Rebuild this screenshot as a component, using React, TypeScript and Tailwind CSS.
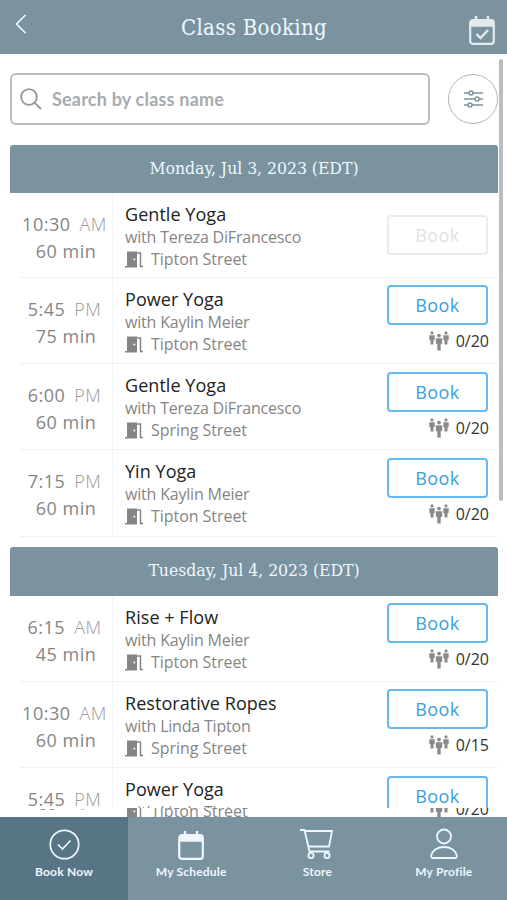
import React from 'react';

const days = [
  {
    title: 'Monday, Jul 3, 2023 (EDT)',
    classes: [
      { time: '10:30', period: 'AM', length: 60, name: 'Gentle Yoga', teacher: 'Tereza DiFrancesco', place: 'Tipton Street', spots: '', size: 'h-[85px]', gap: 'mt-[22px]' },
      { time: '5:45', period: 'PM', length: 75, name: 'Power Yoga', teacher: 'Kaylin Meier', place: 'Tipton Street', spots: '0/20', size: 'h-[86px]', gap: 'mt-[7px]' },
      { time: '6:00', period: 'PM', length: 60, name: 'Gentle Yoga', teacher: 'Tereza DiFrancesco', place: 'Spring Street', spots: '0/20', size: 'h-[86px]', gap: 'mt-[8px]' },
      { time: '7:15', period: 'PM', length: 60, name: 'Yin Yoga', teacher: 'Kaylin Meier', place: 'Tipton Street', spots: '0/20', size: 'h-[87px]', gap: 'mt-[8px]' },
    ],
  },
  {
    title: 'Tuesday, Jul 4, 2023 (EDT)',
    classes: [
      { time: '6:15', period: 'AM', length: 45, name: 'Rise + Flow', teacher: 'Kaylin Meier', place: 'Tipton Street', spots: '0/20', size: 'h-[86px]', gap: 'mt-[7px]' },
      { time: '10:30', period: 'AM', length: 60, name: 'Restorative Ropes', teacher: 'Linda Tipton', place: 'Spring Street', spots: '0/15', size: 'h-[86px]', gap: 'mt-[7px]' },
    ],
  },
];

type ClassItem = (typeof days)[number]['classes'][number];

function DoorIcon() {
  return (
    <svg width="18" height="17" viewBox="0 0 18 17" className="shrink-0">
      <path d="M2 0.5h10v16H0V15h2z" fill="#858585" />
      <path d="M12 2h3.5v13.5H18" fill="none" stroke="#858585" strokeWidth="1.5" />
      <circle cx="9.3" cy="8.5" r="1" fill="#fff" />
    </svg>
  );
}

function PeopleIcon() {
  return (
    <svg width="20" height="20" viewBox="0 0 20 20" fill="#8a8a8a" className="shrink-0">
      <circle cx="3" cy="1.9" r="1.6" />
      <path d="M.3 4.200h5.400v4.600l-1.200.6V13.500h-3V9.400L.3 8.800z" />
      <circle cx="17" cy="1.9" r="1.6" />
      <path d="M14.300 4.200h5.400v4.600l-1.200.6v4.100h-3V9.400l-1.200-.6z" />
      <circle cx="10" cy="4.600" r="1.900" />
      <path d="M6.800 7.200h6.400v5.300l-1.500.7v6.300H8.300v-6.300l-1.500-.7z" />
    </svg>
  );
}

function ClassRow({ item }: { item: ClassItem }) {
  return (
    <div className={`ml-[10px] flex border-b border-[#eff1f2] ${item.size}`}>
      <div className="w-[93px] shrink-0 border-r border-[#f2f4f5] pt-[18px] text-center text-[18px] leading-[27px] tracking-[0.5px] text-[#858585]">
        <p className="whitespace-nowrap pr-[3px]">
          {item.time}<span className="ml-[9px] font-light text-[#999]">{item.period}</span>
        </p>
        <p>{item.length} min</p>
      </div>
      <div className="flex-1 pl-[12px] pt-[9px] text-[16px] leading-[22px] text-[#858585]">
        <h3 className="text-[18px] leading-[24px] tracking-[0.05px] text-[#222]">{item.name}</h3>
        <p className="whitespace-nowrap tracking-[-0.2px]">with {item.teacher}</p>
        <p className="flex items-center gap-[8px] tracking-[-0.05px]"><DoorIcon />{item.place}</p>
      </div>
      <div className="mr-[10px] w-[101px] shrink-0">
        {item.spots ? (
          <>
            <button className={`block h-[40px] w-full rounded-[4px] border-2 border-[#65b9ee] text-[18px] tracking-[0.4px] text-[#3a9fe0] ${item.gap}`}>Book</button>
            <div className="-mr-px mt-[5px] flex items-center justify-end gap-[7px] text-[16px] leading-[22px] text-[#333]">
              <PeopleIcon />{item.spots}
            </div>
          </>
        ) : (
          <button className={`block h-[40px] w-full rounded-[4px] border-2 border-[#ececec] text-[18px] tracking-[0.4px] text-[#e2e2e2] ${item.gap}`}>Book</button>
        )}
      </div>
    </div>
  );
}

function CalendarIcon({ checked }: { checked?: boolean }) {
  return (
    <svg width="26" height="29" viewBox="0 0 26 29" fill="none" stroke="currentColor">
      <path d="M7 0v5M19 0v5" strokeWidth="2.4" />
      <rect x="1.2" y="4.2" width="23.6" height="23.6" rx="2.5" strokeWidth="2.2" />
      <path d="M1.500 7.500h23" strokeWidth="6.500" />
      {checked && <path d="M7.500 18l4 4 7.500-8" strokeWidth="2.400" />}
    </svg>
  );
}

function Tab({ label, active, children }: { label: string; active?: boolean; children: React.ReactNode }) {
  return (
    <div className={active ? 'w-[128px] bg-[#587585] pt-[11px]' : 'flex-1 pt-[11px]'}>
      <div className="flex h-[32px] items-center justify-center">{children}</div>
      <p className="mt-[3px] text-center text-[12px] leading-[18px] font-bold tracking-[0.2px]">{label}</p>
    </div>
  );
}

export default function App() {
  return (
    <div className="relative flex h-[900px] w-[507px] flex-col overflow-hidden bg-white font-['Open_Sans',sans-serif]">
      <header className="flex h-[54px] shrink-0 items-center justify-between bg-[#7b929f] pl-[15px] pr-[12px] text-[#eef8fd]">
        <svg width="12" height="20" viewBox="0 0 12 20" className="mb-[6px]" fill="none" stroke="currentColor" strokeWidth="1.7">
          <path d="M10.5 1L1.5 10l9 9" />
        </svg>
        <h1 className="pl-[12px] font-['DejaVu_Serif_Condensed','DejaVu_Serif',serif] text-[22px] tracking-[0.32px]">Class Booking</h1>
        <div className="mt-[6px] text-[#e2eaee]"><CalendarIcon checked /></div>
      </header>

      <div className="flex h-[91px] shrink-0 items-center justify-between pl-[10px] pr-[9px]">
        <div className="mb-px flex h-[52px] w-[420px] items-center rounded-[6px] border-2 border-[#b9bdbf] pl-[8px]">
          <svg width="22" height="22" viewBox="0 0 22 22" fill="none" stroke="#929699" strokeWidth="1.8">
            <circle cx="9" cy="9" r="7.8" />
            <path d="M14.6 14.6L21 21" />
          </svg>
          <span className="ml-[10px] font-['Lato',sans-serif] text-[18px] font-bold tracking-[0.2px] text-[#a7abaf]">Search by class name</span>
        </div>
        <div className="mb-px flex h-[50px] w-[50px] items-center justify-center rounded-full border-[1.5px] border-[#b5b5b5]">
          <svg width="19" height="18" viewBox="0 0 19 18" fill="#fff" stroke="#7b929f" strokeWidth="1.5">
            <path d="M0 3h19M0 9h19M0 15h19" />
            <circle cx="7" cy="3" r="2" /><circle cx="13" cy="9" r="2" /><circle cx="6" cy="15" r="2" />
          </svg>
        </div>
      </div>

      <main className="h-[663px] shrink-0 overflow-hidden pl-[10px] pr-[9px]">
        {days.map((day, i) => (
          <section key={day.title} className={i ? 'mt-[10px]' : ''}>
            <h2 className={`flex items-center justify-center rounded-t-[3px] bg-[#7b929f] pb-[2px] font-['DejaVu_Serif_Condensed','DejaVu_Serif',serif] text-[17.5px] tracking-[-0.05px] text-[#eef8fd] ${i ? 'h-[49px]' : 'h-[48px]'}`}>{day.title}</h2>
            {day.classes.map((item) => <ClassRow key={item.time} item={item} />)}
          </section>
        ))}
        <ClassRow item={{ time: '5:45', period: 'PM', length: 60, name: 'Power Yoga', teacher: 'Linda Tipton', place: 'Tipton Street', spots: '0/20', size: 'h-[86px]', gap: 'mt-[8px]' }} />
      </main>

      {/* sliver of the scrolled row just above the tab bar */}
      <div className="flex h-[9px] shrink-0 overflow-hidden pl-[20px] pr-[18px] text-[16px] leading-[22px] text-[#858585]">
        <div className="h-[2px] w-[93px] shrink-0 overflow-hidden text-center text-[18px] tracking-[0.5px]">
          <p className="-mt-[4px]">60 min</p>
        </div>
        <p className="-mt-[8px] flex h-[22px] flex-1 items-center gap-[8px] pl-[12px]"><DoorIcon />Tipton Street</p>
        <div className="-mt-[10px] flex h-[22px] items-center gap-[7px] text-[#333]"><PeopleIcon />0/20</div>
      </div>

      <nav className="flex h-[83px] shrink-0 bg-[#7b929f] font-['Lato',sans-serif] text-[#eef8fd]">
        <Tab label="Book Now" active>
          <svg width="31" height="31" viewBox="0 0 31 31" fill="none" stroke="currentColor" strokeWidth="1.7">
            <circle cx="15.5" cy="15.5" r="14.2" /><path d="M9 15.5l4.5 4.5 8-8.5" />
          </svg>
        </Tab>
        <Tab label="My Schedule"><div className="mt-[2px]"><CalendarIcon /></div></Tab>
        <Tab label="Store">
          <svg width="34" height="32" viewBox="0 0 34 32" fill="none" stroke="currentColor" strokeWidth="1.8">
            <path d="M0 2h4.500l5 21.500H29.500M5 3h27l-3 15.500H8.500" />
            <circle cx="11" cy="27.500" r="2.600" /><circle cx="27" cy="27.500" r="2.600" />
          </svg>
        </Tab>
        <Tab label="My Profile">
          <svg width="28" height="32" viewBox="0 0 28 32" fill="none" stroke="currentColor" strokeWidth="1.8">
            <circle cx="14" cy="8.500" r="7" /><path d="M3 30h22q2 0 1.800-2C25 16 3 16 1.200 28q-.2 2 1.800 2z" />
          </svg>
        </Tab>
      </nav>

      <div className="absolute left-[499px] top-[59px] h-[442px] w-[4px] rounded-full bg-[#bdbdbd]" />
    </div>
  );
}
